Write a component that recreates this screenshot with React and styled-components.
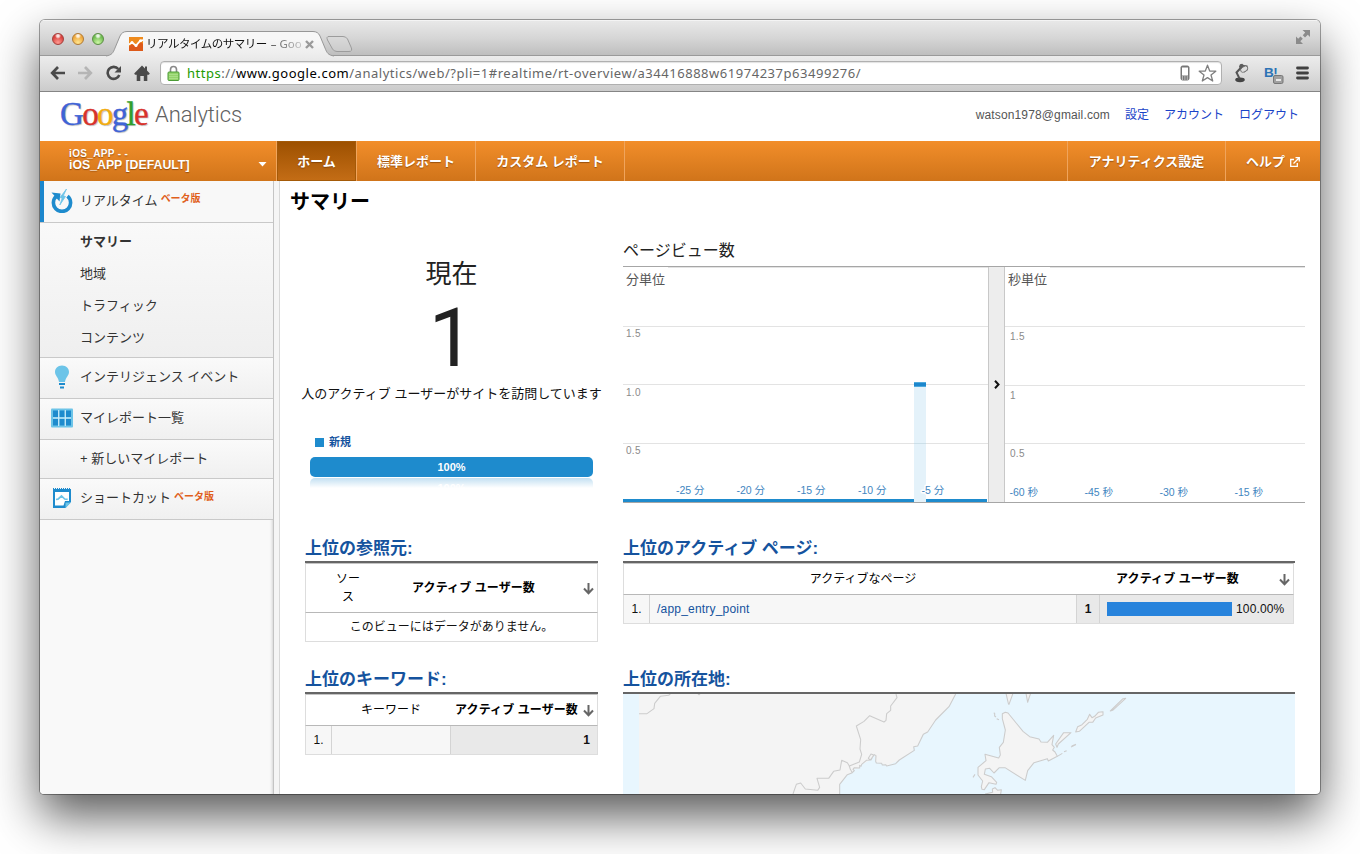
import React from "react";
import styled, { createGlobalStyle } from "styled-components";

const sans = `"Liberation Sans", "Noto Sans CJK JP", sans-serif`;
const chromeFont = `"Noto Sans", "Noto Sans CJK JP", sans-serif`;

const GlobalStyle = createGlobalStyle`
  * { box-sizing: border-box; }
  body { margin: 0; background: #fff; font-family: ${sans}; overflow: hidden; }
  svg { display: block; flex: none; }
`;

const Desktop = styled.div`
  width: 1360px;
  height: 854px;
  padding: 20px 40px;
  background: #fff;
  overflow: hidden;
`;

const BrowserWindow = styled.div`
  width: 1280px;
  height: 774px;
  display: flex;
  flex-direction: column;
  overflow: hidden;
  border-radius: 5px 5px 4px 4px;
  background: #fff;
  box-shadow: 0 0 0 1px rgba(0, 0, 0, 0.35), 0 22px 48px rgba(0, 0, 0, 0.66);
`;

const TabStrip = styled.div`
  height: 36px;
  flex: none;
  display: flex;
  background: linear-gradient(#e9e9e9, #d6d6d6 50%, #bdbdbd);
  box-shadow: inset 0 1px 0 #f4f4f4, inset 0 -1px 0 #9a9a9a;
`;

const Lights = styled.div`
  width: 65px;
  padding: 13px 0 0 12px;
  display: flex;
  gap: 8px;
`;

const Light = styled.span`
  width: 12px;
  height: 12px;
  border-radius: 50%;
  border: 1px solid ${(p) => p.$edge};
  background: radial-gradient(circle at 50% 18%, rgba(255, 255, 255, 0.85) 0 12%, transparent 32%),
    radial-gradient(circle at 50% 85%, ${(p) => p.$glow}, ${(p) => p.$fill} 65%);
`;

const Tab = styled.div`
  position: relative;
  width: 222px;
  height: 36px;
  padding: 15px 0 0 24px;
  display: flex;
`;

const TabShape = styled.svg`
  position: absolute;
  left: 0;
  top: 0;
  overflow: visible;
`;

const TabTitle = styled.div`
  position: relative;
  width: 155px;
  height: 18px;
  margin-left: 3px;
  white-space: nowrap;
  font: 11.5px/18px ${chromeFont};
  letter-spacing: -0.5px;
  color: #111;
  -webkit-mask-image: linear-gradient(90deg, #000 80%, rgba(0, 0, 0, 0.25));
  mask-image: linear-gradient(90deg, #000 80%, rgba(0, 0, 0, 0.25));
  span { margin-left: 4px; letter-spacing: 0; color: #444; }
`;

const Layer = styled.div`
  position: relative;
  display: flex;
`;

const Spacer = styled.div`
  flex: 1;
`;

const Toolbar = styled.div`
  height: 36px;
  flex: none;
  display: flex;
  align-items: center;
  padding: 0 11px 1px 10px;
  background: linear-gradient(#ececec, #e0e0e0 40%, #cbcbcb);
  border-bottom: 1px solid #858585;
`;

const NavIcons = styled.div`
  width: 110px;
  display: flex;
  gap: 12px;
`;

const Omnibox = styled.div`
  width: 1062px;
  height: 24px;
  display: flex;
  align-items: center;
  padding: 0 4px 0 6px;
  border: 1px solid #b0b0b0;
  border-radius: 4px;
  background: #fff;
  box-shadow: inset 0 1px 1px rgba(0, 0, 0, 0.12);
`;

const Url = styled.div`
  margin-left: 7px;
  font: 13px/20px ${chromeFont};
  letter-spacing: 0.53px;
  white-space: nowrap;
  color: #666;
  b { font-weight: 400; color: #000; }
  i { font-style: normal; color: #219a00; }
`;

const Extensions = styled.div`
  flex: 1;
  display: flex;
  align-items: center;
  justify-content: space-between;
  padding-left: 12px;
`;

const Header = styled.header`
  height: 49px;
  flex: none;
  display: flex;
  padding: 0 21px 0 20px;
`;

const Logo = styled.div`
  width: 95px;
  font: 33px/44px "Liberation Serif", serif;
  letter-spacing: -1.7px;
  text-shadow: 1px 1px 1px rgba(0, 0, 0, 0.25);
  -webkit-text-stroke: 0.4px currentColor;
  white-space: nowrap;
`;

const Glyph = styled.span`
  color: ${(p) => p.$c};
  -webkit-text-stroke-color: ${(p) => p.$c};
`;

const Product = styled.div`
  font: 300 22px/46px Roboto, sans-serif;
  letter-spacing: -0.05px;
  color: #606060;
`;

const AccountLinks = styled.div`
  display: flex;
  gap: 15px;
  padding-top: 13px;
  font: 12px/20px ${sans};
  color: #555;
  a { color: #1a44c8; }
  span { letter-spacing: 0.13px; }
`;

const NavBar = styled.nav`
  height: 40px;
  flex: none;
  display: flex;
  background: linear-gradient(#f28e2a, #d0741a);
  color: #fff;
  font: bold 13px/42px ${sans};
  text-shadow: 0 1px 1px rgba(110, 50, 0, 0.6);
`;

const AccountPicker = styled.div`
  width: 237px;
  padding: 7px 9px 0 29px;
  display: flex;
  justify-content: space-between;
  border-right: 1px solid #f0a45c;
`;

const AccountName = styled.div`
  font-size: 12.3px;
  line-height: 12px;
  small { display: block; font-size: 10px; line-height: 11px; letter-spacing: 0.35px; }
`;

const NavItem = styled.div`
  width: ${(p) => p.$w}px;
  display: flex;
  justify-content: center;
  white-space: nowrap;
  border: 0 solid #f0a45c;
  border-width: ${(p) => (p.$left ? "0 0 0 1px" : "0 1px 0 0")};
  ${(p) =>
    p.$active &&
    `background: linear-gradient(#9c5000, #c46d16); box-shadow: inset 0 0 0 1px #a45a08;`}
`;

const Body = styled.div`
  flex: 1;
  min-height: 0;
  display: flex;
`;

const Sidebar = styled.aside`
  width: 234px;
  background: #f9f9f9;
  border-right: 1px solid #c4c4c4;
  box-shadow: inset -3px 0 3px -2px rgba(0, 0, 0, 0.15), inset 0 1px 0 #ccc;
`;

const Gutter = styled.div`
  width: 6px;
  background: #f5f5f5;
  border-right: 1px solid #d8d8d8;
`;

const SideItem = styled.div`
  height: ${(p) => p.$h}px;
  display: flex;
  align-items: center;
  padding: 0 0 ${(p) => (p.$plain ? 0 : 2)}px ${(p) => (p.$active ? 6 : 10)}px;
  background: ${(p) =>
    p.$active
      ? "linear-gradient(90deg, #1c87cd 4px, #f8f8f8 4px)"
      : "linear-gradient(#fafafa, #f0f0f0)"};
  border-bottom: 1px solid #c9c9c9;
  font-size: 13px;
  line-height: 20px;
  color: #333;
`;

const SideIcon = styled.div`
  width: 24px;
  margin-right: 6px;
  margin-left: ${(p) => (p.$shift ? 4 : 0)}px;
  display: flex;
  justify-content: center;
`;

const Beta = styled.span`
  margin: -3px 0 0 3px;
  font-size: 10px;
  font-weight: bold;
  color: #e0601c;
`;

const SubList = styled.div`
  height: 135px;
  padding: 3px 0 0 40px;
  border-bottom: 1px solid #c9c9c9;
  background: linear-gradient(#f9f9f9, #efefef);
`;

const SubItem = styled.div`
  font-size: 13px;
  line-height: 32px;
  font-weight: ${(p) => (p.$bold ? "bold" : "normal")};
  color: #333;
`;

const Main = styled.main`
  flex: 1;
  padding-left: 10px;
`;

const PageTitle = styled.h1`
  height: 41px;
  margin: 0;
  font: bold 20px/42px ${sans};
  color: #000;
`;

const Columns = styled.div`
  display: flex;
  gap: 25px;
  padding-left: 15px;
`;

const LeftColumn = styled.section`
  width: 293px;
`;

const RightColumn = styled.section`
  width: 682px;
`;

const Counter = styled.div`
  height: 312px;
  display: flex;
  flex-direction: column;
  align-items: center;
  padding-top: 32px;
  color: #222;
  white-space: nowrap;
`;

const CounterCaption = styled.div`
  font-size: 26px;
  line-height: 40px;
`;

const CounterValue = styled.div`
  font: 81px/89px Roboto, ${sans};
`;

const CounterNote = styled.div`
  font-size: 13px;
  line-height: 22px;
  color: #111;
`;

const Legend = styled.div`
  align-self: flex-start;
  display: flex;
  align-items: center;
  gap: 5px;
  margin: 27px 0 5px 10px;
  padding-top: 1px;
  font: bold 11px/19px ${sans};
  color: #15539e;
`;

const Swatch = styled.span`
  width: 9px;
  height: 9px;
  margin-top: -1px;
  background: #1e8bcd;
`;

const Share = styled.div`
  width: 283px;
  height: 20px;
  border-radius: 5px;
  background: #1e8bcd;
  color: #fff;
  font: bold 11px/20px ${sans};
  text-align: center;
`;

const Reflection = styled.div`
  width: 283px;
  height: 10px;
  margin-top: 1px;
  overflow: hidden;
  border-radius: 5px 5px 0 0;
  background: linear-gradient(#c3e0f2, #fff);
  color: #fff;
  font: bold 11px/20px ${sans};
  text-align: center;
`;

const ChartTitle = styled.div`
  height: 44px;
  padding-top: 12px;
  font-size: 16px;
  line-height: 33px;
  color: #222;
`;

const Charts = styled.div`
  height: 237px;
  display: flex;
  margin-bottom: 31px;
  border-top: 1px solid #a6a6a6;
  border-bottom: 1px solid #a6a6a6;
`;

const Handle = styled.div`
  width: 17px;
  display: flex;
  align-items: center;
  justify-content: center;
  background: #ededed;
  border-left: 1px solid #c8c8c8;
  border-right: 1px solid #c8c8c8;
`;

const SectionTitle = styled.h2`
  height: 27px;
  margin: 0;
  font: bold 17px/29px ${sans};
  color: #15539e;
`;

const Table = styled.div`
  width: ${(p) => p.$w}px;
  margin-bottom: ${(p) => p.$gap}px;
  border-top: 2px solid #666;
  font-size: 12px;
  line-height: 18px;
  color: #000;
`;

const HeadRow = styled.div`
  height: ${(p) => p.$h}px;
  margin-right: ${(p) => p.$inset || 0}px;
  display: grid;
  grid-template-columns: ${(p) => p.$cols};
  align-items: center;
  text-align: center;
  border: 1px solid #ddd;
  border-top-color: #c4c4c4;
  border-bottom-color: #b8b8b8;
  b { letter-spacing: 0.1px; white-space: nowrap; }
  svg { position: relative; top: 1px; }
`;

const Row = styled.div`
  height: 29px;
  margin-right: ${(p) => p.$inset || 0}px;
  display: grid;
  grid-template-columns: ${(p) => p.$cols};
  text-align: center;
  border: 1px solid #ddd;
  border-top: 0;
`;

const Cell = styled.div`
  display: flex;
  align-items: center;
  justify-content: ${(p) => p.$align || "center"};
  padding: 0 7px;
  background: ${(p) => p.$bg || "#f7f7f7"};
  border-right: ${(p) => (p.$line ? "1px solid #d4d4d4" : "0")};
  font-weight: ${(p) => (p.$bold ? "bold" : "normal")};
  letter-spacing: ${(p) => p.$track || 0}px;
  color: ${(p) => p.$color || "#111"};
`;

const Bar = styled.span`
  width: 125px;
  height: 14px;
  margin-right: 4px;
  background: #2783dc;
`;

const MapPanel = styled.div`
  width: 672px;
  border-top: 2px solid #666;
`;

const SortArrow = () => (
  <svg width="11" height="12" viewBox="0 0 11 12" fill="none" stroke="#666" strokeWidth="2">
    <path d="M5.5 0v10M1 5.5l4.5 4.7L10 5.5" />
  </svg>
);

const MinuteChart = () => (
  <svg width="365" height="235" viewBox="623 267 365 235" fontFamily="Liberation Sans, Noto Sans CJK JP">
    <g stroke="#e3e3e3">
      <path d="M668 267.5H988M623 326.5H988M623 384.5H988M623 443.5H988" />
    </g>
    <rect x="914" y="386" width="12" height="116" fill="#e4f2fa" />
    <path d="M914 443.5h12" stroke="#ccdfe8" />
    <rect x="914" y="382" width="12" height="5" fill="#4fa9dc" />
    <rect x="914" y="383" width="12" height="3" fill="#1c87cd" />
    <path d="M623 500.5H914M926 500.5H987" stroke="#1e8bcd" strokeWidth="3" />
    <text x="626" y="283.5" fontSize="13" fill="#555">分単位</text>
    <g fontSize="10" fill="#8a8a8a" letterSpacing="0.3">
      <text x="626" y="337">1.5</text>
      <text x="626" y="396">1.0</text>
      <text x="626" y="454">0.5</text>
    </g>
    <g fontSize="10.5" fill="#3f86bf" stroke="#fff" strokeWidth="3" paintOrder="stroke" strokeLinejoin="round">
      <text x="676" y="494">-25 分</text>
      <text x="736.5" y="494">-20 分</text>
      <text x="797" y="494">-15 分</text>
      <text x="858" y="494">-10 分</text>
      <text x="921.5" y="494">-5 分</text>
    </g>
  </svg>
);

const SecondChart = () => (
  <svg width="300" height="235" viewBox="1005 267 300 235" fontFamily="Liberation Sans, Noto Sans CJK JP">
    <path d="M1050 267.5H1305M1005 326.5H1305M1005 385.5H1305M1005 443.5H1305" stroke="#e3e3e3" />
    <text x="1008" y="283.5" fontSize="13" fill="#555">秒単位</text>
    <g fontSize="10" fill="#8a8a8a" letterSpacing="0.3">
      <text x="1010" y="340">1.5</text>
      <text x="1010" y="399">1</text>
      <text x="1010" y="457">0.5</text>
    </g>
    <g fontSize="10.5" fill="#3f86bf">
      <text x="1009.5" y="496">-60 秒</text>
      <text x="1084.5" y="496">-45 秒</text>
      <text x="1159.5" y="496">-30 秒</text>
      <text x="1234.5" y="496">-15 秒</text>
    </g>
  </svg>
);

const LocationMap = () => (
  <svg width="672" height="100" viewBox="24 492 2016 300" fill="#f4f4f4" stroke="#cccccc" strokeWidth="3.2" strokeLinejoin="round">
    <rect x="24" y="492" width="2016" height="300" fill="#e8f6fe" stroke="none" />
    <path stroke="none" d="M72 492H1022L1002 530L962 570L938 606L925 613L908 648L896 650L892 665L853 690L815 708L800 700L783 697L779 675L766 690L738 705L734 714L718 718L712 728L697 734L674 763V792H72Z" />
    <path fill="none" d="M1022 492L1002 530L962 570L938 606L925 613L908 648L896 650L898 661L892 665L853 690L842 701L815 708L812 704L802 705L800 700L784 699L782 694L783 677L778 674L766 690L760 685L768 672L776 675L768 690L754 691L740 703L738 709L734 706L734 714L718 713L714 718L718 722L712 728L706 718L703 708M712 728L697 734L674 763V792" />
    <path fill="none" d="M72 551H96L117 536L119 520L136 499L161 496L166 492M249 492q3 4 6 0M843 492L846 503L827 528V541L815 551L813 571L807 576L764 557L747 574L724 588L737 629L735 657L740 673L733 696L703 708L697 698L680 691L675 720L656 724L641 745H606L614 772L608 781L571 777L557 759L544 763L534 792" />
    <path d="M1173 490L1180 520L1182 523L1194 490M1233 490L1238 517L1242 504L1247 490" />
    <path d="M1162 551L1171 547L1179 549L1224 604L1244 620L1272 627L1278 636L1297 637L1316 616L1311 644L1318 652L1313 660L1320 666L1327 679L1300 693L1297 686L1267 695L1257 698L1238 722L1231 751L1170 713H1153L1137 729L1124 715L1111 717L1108 733L1129 740L1145 757L1143 763L1122 758L1108 779L1101 778L1099 770L1103 753L1089 735V712L1113 692L1110 673L1151 684L1156 675L1153 652L1165 637L1171 600L1162 566Z" />
    <path d="M1110 792L1133 787L1132 777L1140 773L1148 781L1159 779L1157 792M1322 642L1346 608L1368 608L1330 642L1326 652ZM1382 606L1388 590L1401 584L1417 568L1424 553L1431 563L1439 559L1450 547L1464 545V555L1442 564L1433 577L1422 577L1393 604ZM1486 543L1524 506L1532 505L1493 541Z" />
    <path fill="none" d="M1136 549l3 1v8l4 3M1145 566l7 3M1327 679l15-9M1347 665l8-3M1368 651l14-7M1370 648l13-5M1074 742l6-9" />
  </svg>
);

export default function App() {
  return (
    <Desktop>
      <GlobalStyle />
      <BrowserWindow>
        <TabStrip>
          <Lights>
            <Light $edge="#a3403c" $fill="#d9413d" $glow="#ff9a92" />
            <Light $edge="#b07a35" $fill="#efa83c" $glow="#ffe690" />
            <Light $edge="#5c8e45" $fill="#6fbc50" $glow="#cdf7a5" />
          </Lights>
          <Tab>
            <TabShape width="250" height="36">
              <defs>
                <linearGradient id="tab" x2="0" y2="1">
                  <stop offset="0.3" stopColor="#f7f7f7" />
                  <stop offset="1" stopColor="#ececec" />
                </linearGradient>
                <linearGradient id="newTab" x2="0" y2="1">
                  <stop stopColor="#dadada" />
                  <stop offset="1" stopColor="#cbcbcb" />
                </linearGradient>
              </defs>
              <path d="M1 36C7 35 8 33 10 28L15 16Q17 11.500 22 11.500H208Q213 11.500 215 16L220 28C222 33 223 35 229 36" fill="url(#tab)" stroke="#979797" />
              <path d="M223 16.500H238Q241 16.500 242.500 19L246 27Q248 31.500 244 31.500H232Q229 31.500 227.500 29L222.500 20Q221 16.500 224 16.500Z" fill="url(#newTab)" stroke="#9c9c9c" />
            </TabShape>
            <Layer>
              <svg width="14" height="14" viewBox="0 0 14 14" style={{ marginTop: 2 }}>
                <rect width="14" height="14" fill="#ee8a1c" />
                <path d="M0 9.500L3 7l4 2.500L12 5l2 2v7H0z" fill="#dd5a1a" />
                <path d="M0 7.500L3 5.500l4 3L11 4l3-1" fill="none" stroke="#fff" strokeWidth="1.800" />
                <g fill="#fff"><circle cx="3" cy="5.500" r="1.500" /><circle cx="7" cy="8.500" r="1.500" /><circle cx="11.500" cy="3.800" r="1.500" /></g>
              </svg>
              <TabTitle>リアルタイムのサマリー<span>– Goo</span></TabTitle>
              <svg width="9" height="9" viewBox="0 0 9 9" stroke="#9a9a9a" strokeWidth="2.400" style={{ margin: "5px 0 0 4px" }}>
                <path d="M1 1l7 7M8 1L1 8" />
              </svg>
            </Layer>
          </Tab>
          <Spacer />
          <svg width="14" height="14" viewBox="0 0 14 14" fill="#8b8b8b" style={{ margin: "10px 10px 0 0" }}>
            <path d="M6.500 0H14v7l-2.200-2.200L9 7.500 6.800 5.200 9.200 2.500zM0 6.500l2.200 2.200L4.500 6.500l2.300 2.200-2.500 2.500L7 14H0z" />
          </svg>
        </TabStrip>

        <Toolbar>
          <NavIcons>
            <svg width="15" height="16" viewBox="0 0 15 16" fill="none" stroke="#4a4a4a" strokeWidth="2.700">
              <path d="M8 2L2.200 8 8 14M2.500 8H15" />
            </svg>
            <svg width="15" height="16" viewBox="0 0 15 16" fill="none" stroke="#b5b5b5" strokeWidth="2.700" style={{ marginLeft: 1 }}>
              <path d="M7 2l5.800 6L7 14M12.500 8H0" />
            </svg>
            <svg width="16" height="16" viewBox="0 0 16 16" style={{ marginLeft: 1 }}>
              <path d="M13.300 10A6 6 0 1 1 12.300 4" fill="none" stroke="#4a4a4a" strokeWidth="2.600" />
              <path d="M15 1v6.500H8.500z" fill="#4a4a4a" />
            </svg>
            <svg width="16" height="16" viewBox="0 0 16 16" fill="#4a4a4a">
              <path d="M8 .5l3 3V1.500h2V5.500L15.800 8.600l-.9 1.200H13.300V16H9.800v-5H6.300v5H2.700V9.800H1L.2 8.600z" />
            </svg>
          </NavIcons>
          <Omnibox>
            <svg width="13" height="16" viewBox="0 0 13 16">
              <path d="M3.500 8V4.500a3 3 0 0 1 6 0V8" fill="none" stroke="#888" strokeWidth="1.600" />
              <rect x="1" y="7" width="11" height="8.500" rx="1" fill="#93d36a" stroke="#4b9b35" />
              <path d="M2 9.500h9M2 11.500h9M2 13.500h9" stroke="#a9de87" />
            </svg>
            <Url><i>https</i>://<b>www.google.com</b>/analytics/web/?pli=1#realtime/rt-overview/a34416888w61974237p63499276/</Url>
            <Spacer />
            <svg width="10" height="16" viewBox="0 0 10 16">
              <rect x="1" y="1" width="8" height="14" rx="1.500" fill="#777" stroke="#777" />
              <rect x="2" y="2.500" width="6" height="8" fill="#fff" />
              <path d="M2 12h6M2 14h6" stroke="#fff" strokeDasharray="1 1.400" />
            </svg>
            <svg width="19" height="19" viewBox="0 0 19 19" fill="#fff" stroke="#808080" strokeWidth="1.300" strokeLinejoin="round" style={{ marginLeft: 8 }}>
              <path d="M9.500 1.200l2.200 5.800 6.100.2-4.800 3.800 1.700 6-5.200-3.400L4.300 17 6 11 1.200 7.200l6.100-.2z" />
            </svg>
          </Omnibox>
          <Extensions>
            <svg width="15" height="20" viewBox="0 0 15 20">
              <ellipse cx="6" cy="16.800" rx="4.800" ry="2.400" fill="#444" />
              <path d="M5.500 15.500L2.500 9.500 8.500 3" fill="none" stroke="#555" strokeWidth="2" />
              <path d="M5 3.500L6 1.200 8.200.8l1.500 1.200 3.800.5.500 4.500-3.500 2.500-4-2z" fill="#5c5c5c" />
              <ellipse cx="10.200" cy="6.200" rx="4" ry="2.500" transform="rotate(-35 10.200 6.200)" fill="#ddd" stroke="#666" strokeWidth=".7" />
            </svg>
            <svg width="20" height="22" viewBox="0 0 20 22" style={{ marginLeft: 3 }}>
              <text x="0" y="15" fontFamily="Liberation Sans" fontSize="13.500" fontWeight="bold" letterSpacing="-0.400" fill="#2c73b5">B!</text>
              <rect x="9.500" y="13.500" width="9.500" height="8" rx="1.500" fill="#a0a0a0" stroke="#777" />
              <path d="M12 18h5" stroke="#fff" strokeWidth="1.500" />
            </svg>
            <svg width="13" height="14" viewBox="0 0 13 14" stroke="#404040" strokeWidth="2.800" strokeLinecap="round">
              <path d="M1.500 2h10M1.500 7h10M1.500 12h10" />
            </svg>
          </Extensions>
        </Toolbar>

        <Header>
          <Logo>
            <Glyph $c="#3f63d6">G</Glyph><Glyph $c="#d8322b">o</Glyph><Glyph $c="#f2ac10">o</Glyph><Glyph $c="#3f63d6">g</Glyph><Glyph $c="#2fa02d">l</Glyph><Glyph $c="#d8322b">e</Glyph>
          </Logo>
          <Product>Analytics</Product>
          <Spacer />
          <AccountLinks>
            <span>watson1978@gmail.com</span>
            <a>設定</a>
            <a>アカウント</a>
            <a>ログアウト</a>
          </AccountLinks>
        </Header>

        <NavBar>
          <AccountPicker>
            <AccountName><small>iOS_APP - -</small>iOS_APP [DEFAULT]</AccountName>
            <svg width="9" height="5" viewBox="0 0 9 5" fill="#fff" style={{ marginTop: 14 }}><path d="M0.500 0h8l-4 4.500z" /></svg>
          </AccountPicker>
          <NavItem $w={80} $active>ホーム</NavItem>
          <NavItem $w={119}>標準レポート</NavItem>
          <NavItem $w={149}>カスタム レポート</NavItem>
          <Spacer />
          <NavItem $w={158} $left>アナリティクス設定</NavItem>
          <NavItem $w={95} $left>
            ヘルプ
            <svg width="10" height="10" viewBox="0 0 10 10" fill="none" stroke="#fff" strokeWidth="1.300" style={{ margin: "16px 0 0 5px" }}>
              <path d="M4 2.500H.7v6.800h6.600V6M3.500 6.500L9 1M5.500.7h3.800v3.800" />
            </svg>
          </NavItem>
        </NavBar>

        <Body>
          <Sidebar>
            <SideItem $h={42} $active>
              <SideIcon $shift>
                <svg width="22" height="24" viewBox="0 0 22 24">
                  <path d="M5.500 7.200A8.600 8.600 0 1 0 16.500 7.200" fill="none" stroke="#1e8bcd" strokeWidth="3.600" />
                  <path d="M.5 3.500L9.500 4.500 8.500 12.500z" fill="#1e8bcd" />
                  <path d="M15.500 0L9 8.500l2.200.8L8.800 16l5.700-8.500-2.200-.7z" fill="#6cc4e8" stroke="#6cc4e8" strokeWidth=".8" />
                </svg>
              </SideIcon>
              リアルタイム<Beta>ベータ版</Beta>
            </SideItem>
            <SubList>
              <SubItem $bold>サマリー</SubItem>
              <SubItem>地域</SubItem>
              <SubItem>トラフィック</SubItem>
              <SubItem>コンテンツ</SubItem>
            </SubList>
            <SideItem $h={41}>
              <SideIcon>
                <svg width="16" height="24" viewBox="0 0 16 24">
                  <path d="M8 0.500C3.500.5 1 3.600 1 7c0 3.500 3.500 5.500 4 10h6c.5-4.500 4-6.500 4-10 0-3.400-2.500-6.500-7-6.500z" fill="#6cc4e8" />
                  <path d="M5 19h6M6 22.500h4" stroke="#1e8bcd" strokeWidth="2" />
                </svg>
              </SideIcon>
              インテリジェンス イベント
            </SideItem>
            <SideItem $h={41}>
              <SideIcon>
                <svg width="22" height="20" viewBox="0 0 22 20">
                  <rect width="22" height="19" y="0.500" rx="1" fill="#6cc4e8" />
                  <path d="M2 2.500h5v6.500H2zM8.500 2.500h5v6.500h-5zM15 2.500h5v6.500h-5zM2 11h5v6.500H2zM8.500 11h5v6.500h-5zM15 11h5v6.500h-5z" fill="#1e8bcd" />
                  <path d="M2 10h18M7.700 2v16M14.300 2v16" stroke="#d5eefa" />
                </svg>
              </SideIcon>
              マイレポート一覧
            </SideItem>
            <SideItem $h={39} $plain><SideIcon />+ 新しいマイレポート</SideItem>
            <SideItem $h={41}>
              <SideIcon>
                <svg width="18" height="20" viewBox="0 0 18 20">
                  <path d="M0 1h18v13l-5.500 6H0z" fill="#1e8bcd" />
                  <path d="M2 4h14v9h-4l-1.500 4.500H2z" fill="#fff" />
                  <path d="M0 .5h18" stroke="#1e8bcd" strokeDasharray="1 1" />
                  <path d="M3 11.500l2-.3L8.500 8l3.200 3 3 .3" fill="none" stroke="#6cc4e8" strokeWidth="1.700" />
                  <path d="M18 14.500h-5.500V20z" fill="#6cc4e8" />
                </svg>
              </SideIcon>
              ショートカット<Beta>ベータ版</Beta>
            </SideItem>
          </Sidebar>
          <Gutter />

          <Main>
            <PageTitle>サマリー</PageTitle>
            <Columns>
              <LeftColumn>
                <Counter>
                  <CounterCaption>現在</CounterCaption>
                  <CounterValue>1</CounterValue>
                  <CounterNote>人のアクティブ ユーザーがサイトを訪問しています</CounterNote>
                  <Legend><Swatch />新規</Legend>
                  <Share>100%</Share>
                  <Reflection>100%</Reflection>
                </Counter>
                <SectionTitle>上位の参照元:</SectionTitle>
                <Table $w={293} $gap={23}>
                  <HeadRow $h={50} $cols="26px 32px 1fr 14px">
                    <span />
                    <span>ソース</span>
                    <b>アクティブ ユーザー数</b>
                    <SortArrow />
                  </HeadRow>
                  <Row $cols="1fr">
                    <Cell $bg="#fff">このビューにはデータがありません。</Cell>
                  </Row>
                </Table>
                <SectionTitle>上位のキーワード:</SectionTitle>
                <Table $w={293} $gap={0}>
                  <HeadRow $h={32} $cols="26px 118px 1fr 14px">
                    <span />
                    <span>キーワード</span>
                    <b>アクティブ ユーザー数</b>
                    <SortArrow />
                  </HeadRow>
                  <Row $cols="26px 119px 1fr">
                    <Cell $line>1.</Cell>
                    <Cell $line />
                    <Cell $bold $bg="#e9e9e9" $align="flex-end">1</Cell>
                  </Row>
                </Table>
              </LeftColumn>

              <RightColumn>
                <ChartTitle>ページビュー数</ChartTitle>
                <Charts>
                  <MinuteChart />
                  <Handle>
                    <svg width="6" height="9" viewBox="0 0 6 9" fill="none" stroke="#111" strokeWidth="2"><path d="M1 .8l3.500 3.700L1 8.200" /></svg>
                  </Handle>
                  <SecondChart />
                </Charts>
                <SectionTitle>上位のアクティブ ページ:</SectionTitle>
                <Table $w={672} $gap={41}>
                  <HeadRow $h={32} $inset={1} $cols="26px 426px 1fr 14px">
                    <span />
                    <span>アクティブなページ</span>
                    <b>アクティブ ユーザー数</b>
                    <SortArrow />
                  </HeadRow>
                  <Row $inset={1} $cols="26px 427px 23px 1fr">
                    <Cell $line>1.</Cell>
                    <Cell $line $align="flex-start" $color="#15539e" $track={0.2}>/app_entry_point</Cell>
                    <Cell $line $bold $bg="#e9e9e9">1</Cell>
                    <Cell $bg="#e9e9e9" $align="flex-start" $track={0.15}><Bar />100.00%</Cell>
                  </Row>
                </Table>
                <SectionTitle>上位の所在地:</SectionTitle>
                <MapPanel><LocationMap /></MapPanel>
              </RightColumn>
            </Columns>
          </Main>
        </Body>
      </BrowserWindow>
    </Desktop>
  );
}
